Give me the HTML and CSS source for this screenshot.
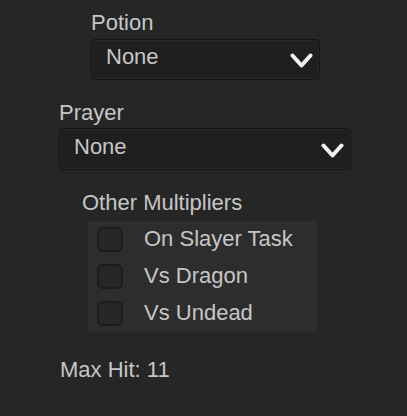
FILE: index.html
```html
<!DOCTYPE html>
<html>
<head>
<meta charset="utf-8">
<link rel="stylesheet" href="styles.css">
</head>
<body>
<div class="form">
  <div class="field potion">
    <div class="label">Potion</div>
    <div class="select">
      <span class="value">None</span>
      <svg class="chev" viewBox="0 0 23 15" width="23" height="15"><polyline points="2.5,2.5 11.5,12.5 20.5,2.5" fill="none" stroke="#f2f2f2" stroke-width="4" stroke-linejoin="round" stroke-linecap="round"/></svg>
    </div>
  </div>
  <div class="field prayer">
    <div class="label">Prayer</div>
    <div class="select tall">
      <span class="value">None</span>
      <svg class="chev" viewBox="0 0 23 15" width="23" height="15"><polyline points="2.5,2.5 11.5,12.5 20.5,2.5" fill="none" stroke="#f2f2f2" stroke-width="4" stroke-linejoin="round" stroke-linecap="round"/></svg>
    </div>
  </div>
  <div class="multipliers">
    <div class="label">Other Multipliers</div>
    <div class="panel">
      <div class="row"><span class="box"></span><span class="opt">On Slayer Task</span></div>
      <div class="row"><span class="box"></span><span class="opt">Vs Dragon</span></div>
      <div class="row"><span class="box"></span><span class="opt">Vs Undead</span></div>
    </div>
  </div>
  <div class="maxhit">Max Hit: 11</div>
</div>
</body>
</html>
```

FILE: styles.css
```css
html, body {
  margin: 0;
  padding: 0;
  background: #262626;
}
body {
  width: 407px;
  height: 416px;
  overflow: hidden;
  font-family: "Liberation Sans", Arial, sans-serif;
  font-size: 22px;
  line-height: 25px;
  color: #c6c6c6;
}
.form {
  margin-left: 59px;
  width: 292px;
  padding-top: 10px;
  display: flex;
  flex-direction: column;
}
.field {
  display: flex;
  flex-direction: column;
}
.potion {
  margin-left: 32px;
  width: 229px;
  gap: 4px;
}
.prayer {
  margin-top: 20px;
  width: 292px;
  gap: 3px;
}
.select {
  box-sizing: border-box;
  height: 41px;
  background: #1f1f1f;
  border: 1px solid #141414;
  border-radius: 4px;
  box-shadow: inset 0 0 0 1px #272727;
  display: flex;
  align-items: flex-start;
  justify-content: space-between;
  padding: 4px 6px 0 14px;
}
.select.tall {
  height: 42px;
  padding-top: 5px;
}
.chev {
  margin-top: 9px;
}
.multipliers {
  margin-top: 20px;
  margin-left: 23px;
  display: flex;
  flex-direction: column;
  gap: 6px;
}
.panel {
  margin-left: 6px;
  width: 229px;
  box-sizing: border-box;
  background: #2d2d2d;
  padding: 6px 9px;
  display: flex;
  flex-direction: column;
  gap: 12px;
}
.row {
  display: flex;
  align-items: center;
  gap: 21px;
  height: 25px;
}
.box {
  box-sizing: border-box;
  width: 26px;
  height: 25px;
  border-radius: 6px;
  background: #272727;
  border: 2px solid #1c1c1c;
}
.opt {
  padding-bottom: 3px;
}
.maxhit {
  margin-top: 25px;
  margin-left: 1px;
}
```
